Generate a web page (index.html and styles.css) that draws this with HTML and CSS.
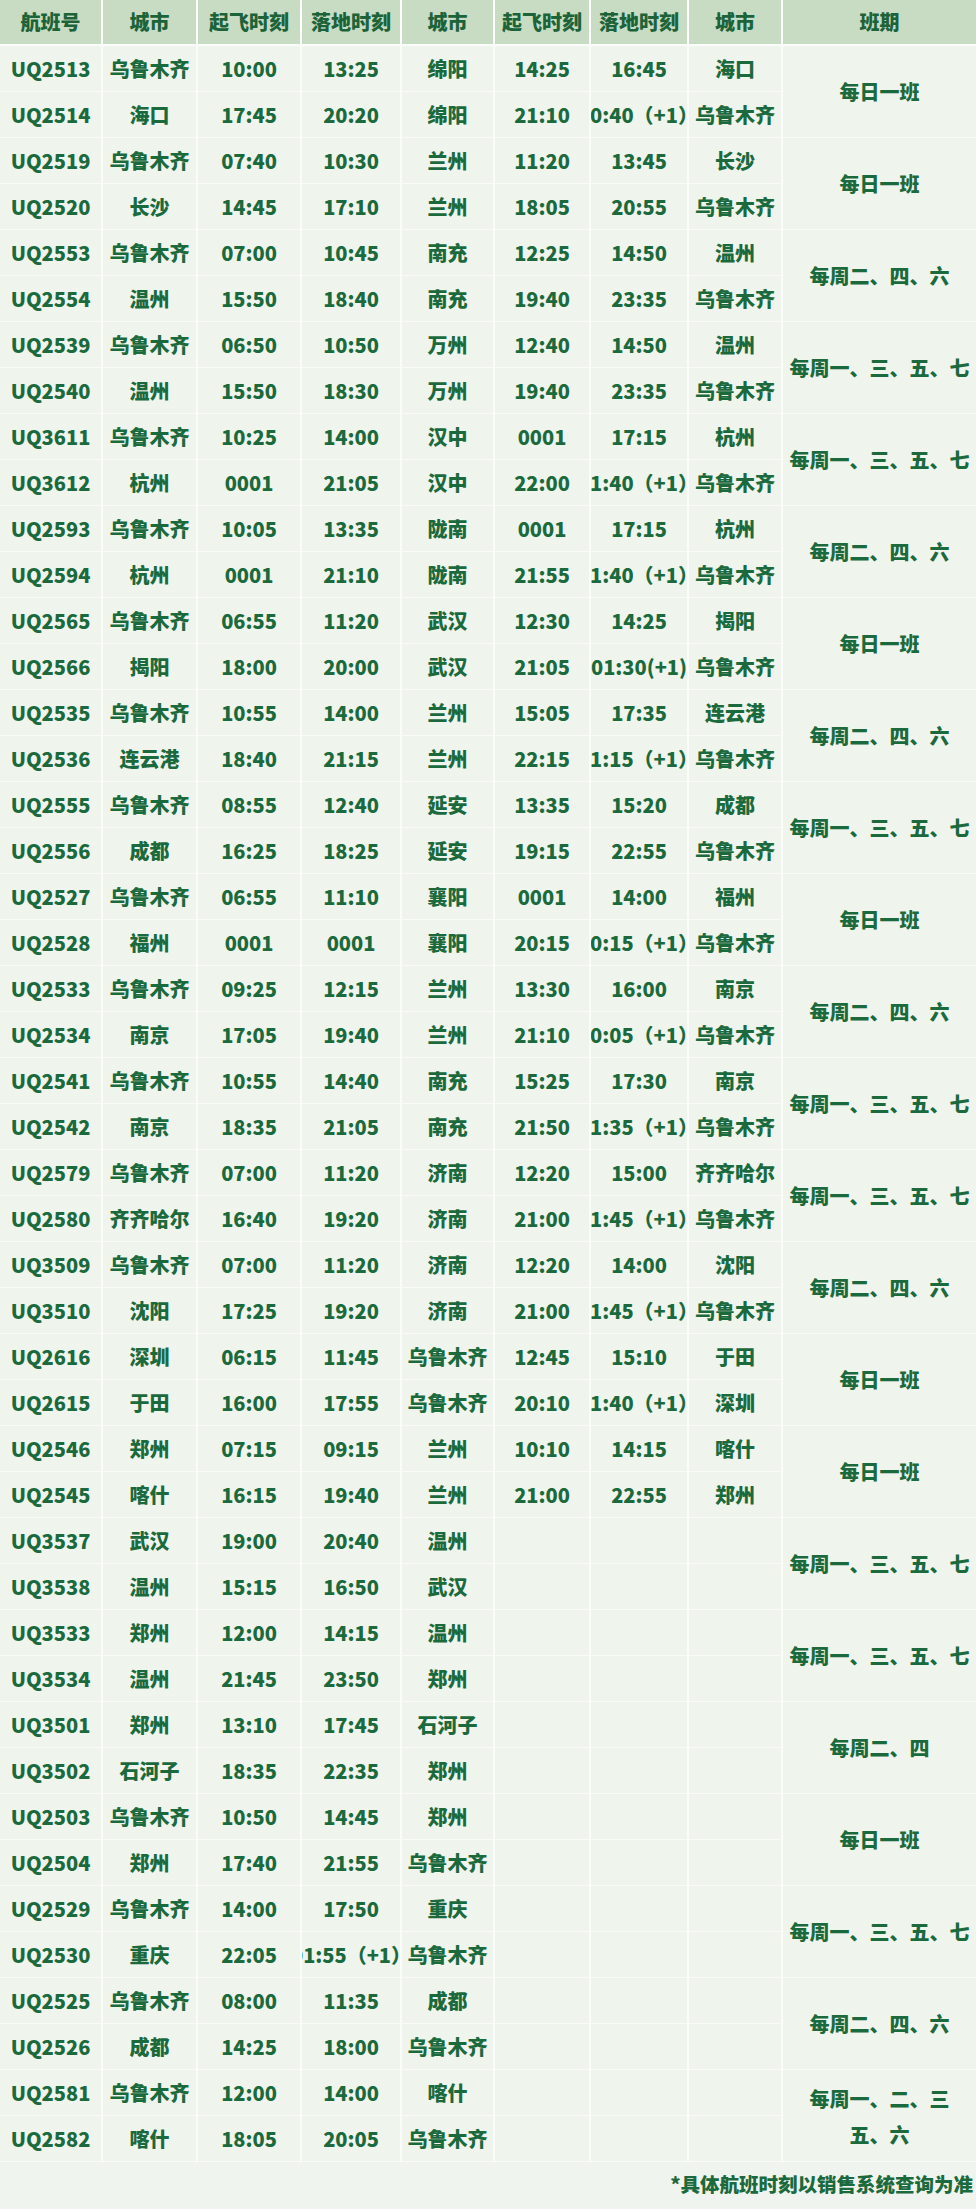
FILE: index.html
```html
<!DOCTYPE html>
<html lang="zh-CN">
<head>
<meta charset="utf-8">
<title>航班时刻表</title>
<link rel="stylesheet" href="styles.css">
</head>
<body>
<div class="page">
  <div class="grid">
    <div class="c h">航班号</div><div class="c h">城市</div><div class="c h">起飞时刻</div><div class="c h">落地时刻</div><div class="c h">城市</div><div class="c h">起飞时刻</div><div class="c h">落地时刻</div><div class="c h">城市</div><div class="c h last">班期</div>

    <div class="c">UQ2513</div><div class="c">乌鲁木齐</div><div class="c">10:00</div><div class="c">13:25</div><div class="c">绵阳</div><div class="c">14:25</div><div class="c">16:45</div><div class="c">海口</div><div class="c s">每日一班</div>
    <div class="c">UQ2514</div><div class="c">海口</div><div class="c">17:45</div><div class="c">20:20</div><div class="c">绵阳</div><div class="c">21:10</div><div class="c">0:40（+1<span class="rp">）</span></div><div class="c">乌鲁木齐</div>

    <div class="c">UQ2519</div><div class="c">乌鲁木齐</div><div class="c">07:40</div><div class="c">10:30</div><div class="c">兰州</div><div class="c">11:20</div><div class="c">13:45</div><div class="c">长沙</div><div class="c s">每日一班</div>
    <div class="c">UQ2520</div><div class="c">长沙</div><div class="c">14:45</div><div class="c">17:10</div><div class="c">兰州</div><div class="c">18:05</div><div class="c">20:55</div><div class="c">乌鲁木齐</div>

    <div class="c">UQ2553</div><div class="c">乌鲁木齐</div><div class="c">07:00</div><div class="c">10:45</div><div class="c">南充</div><div class="c">12:25</div><div class="c">14:50</div><div class="c">温州</div><div class="c s">每周二、四、六</div>
    <div class="c">UQ2554</div><div class="c">温州</div><div class="c">15:50</div><div class="c">18:40</div><div class="c">南充</div><div class="c">19:40</div><div class="c">23:35</div><div class="c">乌鲁木齐</div>

    <div class="c">UQ2539</div><div class="c">乌鲁木齐</div><div class="c">06:50</div><div class="c">10:50</div><div class="c">万州</div><div class="c">12:40</div><div class="c">14:50</div><div class="c">温州</div><div class="c s">每周一、三、五、七</div>
    <div class="c">UQ2540</div><div class="c">温州</div><div class="c">15:50</div><div class="c">18:30</div><div class="c">万州</div><div class="c">19:40</div><div class="c">23:35</div><div class="c">乌鲁木齐</div>

    <div class="c">UQ3611</div><div class="c">乌鲁木齐</div><div class="c">10:25</div><div class="c">14:00</div><div class="c">汉中</div><div class="c">0001</div><div class="c">17:15</div><div class="c">杭州</div><div class="c s">每周一、三、五、七</div>
    <div class="c">UQ3612</div><div class="c">杭州</div><div class="c">0001</div><div class="c">21:05</div><div class="c">汉中</div><div class="c">22:00</div><div class="c">1:40（+1<span class="rp">）</span></div><div class="c">乌鲁木齐</div>

    <div class="c">UQ2593</div><div class="c">乌鲁木齐</div><div class="c">10:05</div><div class="c">13:35</div><div class="c">陇南</div><div class="c">0001</div><div class="c">17:15</div><div class="c">杭州</div><div class="c s">每周二、四、六</div>
    <div class="c">UQ2594</div><div class="c">杭州</div><div class="c">0001</div><div class="c">21:10</div><div class="c">陇南</div><div class="c">21:55</div><div class="c">1:40（+1<span class="rp">）</span></div><div class="c">乌鲁木齐</div>

    <div class="c">UQ2565</div><div class="c">乌鲁木齐</div><div class="c">06:55</div><div class="c">11:20</div><div class="c">武汉</div><div class="c">12:30</div><div class="c">14:25</div><div class="c">揭阳</div><div class="c s">每日一班</div>
    <div class="c">UQ2566</div><div class="c">揭阳</div><div class="c">18:00</div><div class="c">20:00</div><div class="c">武汉</div><div class="c">21:05</div><div class="c">01:30(+1)</div><div class="c">乌鲁木齐</div>

    <div class="c">UQ2535</div><div class="c">乌鲁木齐</div><div class="c">10:55</div><div class="c">14:00</div><div class="c">兰州</div><div class="c">15:05</div><div class="c">17:35</div><div class="c">连云港</div><div class="c s">每周二、四、六</div>
    <div class="c">UQ2536</div><div class="c">连云港</div><div class="c">18:40</div><div class="c">21:15</div><div class="c">兰州</div><div class="c">22:15</div><div class="c">1:15（+1<span class="rp">）</span></div><div class="c">乌鲁木齐</div>

    <div class="c">UQ2555</div><div class="c">乌鲁木齐</div><div class="c">08:55</div><div class="c">12:40</div><div class="c">延安</div><div class="c">13:35</div><div class="c">15:20</div><div class="c">成都</div><div class="c s">每周一、三、五、七</div>
    <div class="c">UQ2556</div><div class="c">成都</div><div class="c">16:25</div><div class="c">18:25</div><div class="c">延安</div><div class="c">19:15</div><div class="c">22:55</div><div class="c">乌鲁木齐</div>

    <div class="c">UQ2527</div><div class="c">乌鲁木齐</div><div class="c">06:55</div><div class="c">11:10</div><div class="c">襄阳</div><div class="c">0001</div><div class="c">14:00</div><div class="c">福州</div><div class="c s">每日一班</div>
    <div class="c">UQ2528</div><div class="c">福州</div><div class="c">0001</div><div class="c">0001</div><div class="c">襄阳</div><div class="c">20:15</div><div class="c">0:15（+1<span class="rp">）</span></div><div class="c">乌鲁木齐</div>

    <div class="c">UQ2533</div><div class="c">乌鲁木齐</div><div class="c">09:25</div><div class="c">12:15</div><div class="c">兰州</div><div class="c">13:30</div><div class="c">16:00</div><div class="c">南京</div><div class="c s">每周二、四、六</div>
    <div class="c">UQ2534</div><div class="c">南京</div><div class="c">17:05</div><div class="c">19:40</div><div class="c">兰州</div><div class="c">21:10</div><div class="c">0:05（+1<span class="rp">）</span></div><div class="c">乌鲁木齐</div>

    <div class="c">UQ2541</div><div class="c">乌鲁木齐</div><div class="c">10:55</div><div class="c">14:40</div><div class="c">南充</div><div class="c">15:25</div><div class="c">17:30</div><div class="c">南京</div><div class="c s">每周一、三、五、七</div>
    <div class="c">UQ2542</div><div class="c">南京</div><div class="c">18:35</div><div class="c">21:05</div><div class="c">南充</div><div class="c">21:50</div><div class="c">1:35（+1<span class="rp">）</span></div><div class="c">乌鲁木齐</div>

    <div class="c">UQ2579</div><div class="c">乌鲁木齐</div><div class="c">07:00</div><div class="c">11:20</div><div class="c">济南</div><div class="c">12:20</div><div class="c">15:00</div><div class="c">齐齐哈尔</div><div class="c s">每周一、三、五、七</div>
    <div class="c">UQ2580</div><div class="c">齐齐哈尔</div><div class="c">16:40</div><div class="c">19:20</div><div class="c">济南</div><div class="c">21:00</div><div class="c">1:45（+1<span class="rp">）</span></div><div class="c">乌鲁木齐</div>

    <div class="c">UQ3509</div><div class="c">乌鲁木齐</div><div class="c">07:00</div><div class="c">11:20</div><div class="c">济南</div><div class="c">12:20</div><div class="c">14:00</div><div class="c">沈阳</div><div class="c s">每周二、四、六</div>
    <div class="c">UQ3510</div><div class="c">沈阳</div><div class="c">17:25</div><div class="c">19:20</div><div class="c">济南</div><div class="c">21:00</div><div class="c">1:45（+1<span class="rp">）</span></div><div class="c">乌鲁木齐</div>

    <div class="c">UQ2616</div><div class="c">深圳</div><div class="c">06:15</div><div class="c">11:45</div><div class="c">乌鲁木齐</div><div class="c">12:45</div><div class="c">15:10</div><div class="c">于田</div><div class="c s">每日一班</div>
    <div class="c">UQ2615</div><div class="c">于田</div><div class="c">16:00</div><div class="c">17:55</div><div class="c">乌鲁木齐</div><div class="c">20:10</div><div class="c">1:40（+1<span class="rp">）</span></div><div class="c">深圳</div>

    <div class="c">UQ2546</div><div class="c">郑州</div><div class="c">07:15</div><div class="c">09:15</div><div class="c">兰州</div><div class="c">10:10</div><div class="c">14:15</div><div class="c">喀什</div><div class="c s">每日一班</div>
    <div class="c">UQ2545</div><div class="c">喀什</div><div class="c">16:15</div><div class="c">19:40</div><div class="c">兰州</div><div class="c">21:00</div><div class="c">22:55</div><div class="c">郑州</div>

    <div class="c">UQ3537</div><div class="c">武汉</div><div class="c">19:00</div><div class="c">20:40</div><div class="c">温州</div><div class="c"></div><div class="c"></div><div class="c"></div><div class="c s">每周一、三、五、七</div>
    <div class="c">UQ3538</div><div class="c">温州</div><div class="c">15:15</div><div class="c">16:50</div><div class="c">武汉</div><div class="c"></div><div class="c"></div><div class="c"></div>

    <div class="c">UQ3533</div><div class="c">郑州</div><div class="c">12:00</div><div class="c">14:15</div><div class="c">温州</div><div class="c"></div><div class="c"></div><div class="c"></div><div class="c s">每周一、三、五、七</div>
    <div class="c">UQ3534</div><div class="c">温州</div><div class="c">21:45</div><div class="c">23:50</div><div class="c">郑州</div><div class="c"></div><div class="c"></div><div class="c"></div>

    <div class="c">UQ3501</div><div class="c">郑州</div><div class="c">13:10</div><div class="c">17:45</div><div class="c">石河子</div><div class="c"></div><div class="c"></div><div class="c"></div><div class="c s">每周二、四</div>
    <div class="c">UQ3502</div><div class="c">石河子</div><div class="c">18:35</div><div class="c">22:35</div><div class="c">郑州</div><div class="c"></div><div class="c"></div><div class="c"></div>

    <div class="c">UQ2503</div><div class="c">乌鲁木齐</div><div class="c">10:50</div><div class="c">14:45</div><div class="c">郑州</div><div class="c"></div><div class="c"></div><div class="c"></div><div class="c s">每日一班</div>
    <div class="c">UQ2504</div><div class="c">郑州</div><div class="c">17:40</div><div class="c">21:55</div><div class="c">乌鲁木齐</div><div class="c"></div><div class="c"></div><div class="c"></div>

    <div class="c">UQ2529</div><div class="c">乌鲁木齐</div><div class="c">14:00</div><div class="c">17:50</div><div class="c">重庆</div><div class="c"></div><div class="c"></div><div class="c"></div><div class="c s">每周一、三、五、七</div>
    <div class="c">UQ2530</div><div class="c">重庆</div><div class="c">22:05</div><div class="c">01:55（+1）</div><div class="c">乌鲁木齐</div><div class="c"></div><div class="c"></div><div class="c"></div>

    <div class="c">UQ2525</div><div class="c">乌鲁木齐</div><div class="c">08:00</div><div class="c">11:35</div><div class="c">成都</div><div class="c"></div><div class="c"></div><div class="c"></div><div class="c s">每周二、四、六</div>
    <div class="c">UQ2526</div><div class="c">成都</div><div class="c">14:25</div><div class="c">18:00</div><div class="c">乌鲁木齐</div><div class="c"></div><div class="c"></div><div class="c"></div>

    <div class="c">UQ2581</div><div class="c">乌鲁木齐</div><div class="c">12:00</div><div class="c">14:00</div><div class="c">喀什</div><div class="c"></div><div class="c"></div><div class="c"></div><div class="c s wrap"><span>每周一、二、三</span><span>五、六</span></div>
    <div class="c">UQ2582</div><div class="c">喀什</div><div class="c">18:05</div><div class="c">20:05</div><div class="c">乌鲁木齐</div><div class="c"></div><div class="c"></div><div class="c"></div>
  </div>
  <div class="note">*具体航班时刻以销售系统查询为准</div>
</div>
</body>
</html>
```

FILE: styles.css
```css
html, body {
  margin: 0;
  padding: 0;
  background: #f0f4ee;
}

.page {
  width: 976px;
  font-family: "Noto Sans CJK SC", "Noto Sans", sans-serif;
  font-weight: 900;
  font-size: 20px;
  color: #1b6a3d;
}

.grid {
  display: grid;
  grid-template-columns: 103px 95px 104px 100px 93px 96px 98px 94px 193px;
  grid-auto-rows: 46px;
  background: #eff4ec;
}

.c {
  display: flex;
  align-items: center;
  justify-content: center;
  box-sizing: border-box;
  border-right: 2px solid #fafcf9;
  border-bottom: 1px solid #f9fbf8;
  overflow: hidden;
  white-space: nowrap;
  line-height: 1;
}

.rp {
  display: inline-block;
  width: 0.5em;
  overflow: visible;
}

.h {
  background: #c7dcc2;
  border-right-color: #ffffff;
  border-bottom: 2px solid #fbfdfa;
  color: #1c6339;
}

.h.last {
  border-right: none;
}

.s {
  grid-row: span 2;
  border-right: none;
}

.wrap {
  flex-direction: column;
  line-height: 36px;
  padding-top: 2px;
}

.note {
  height: 47px;
  line-height: 44px;
  text-align: right;
  padding-right: 3px;
  font-size: 19.5px;
}
```
